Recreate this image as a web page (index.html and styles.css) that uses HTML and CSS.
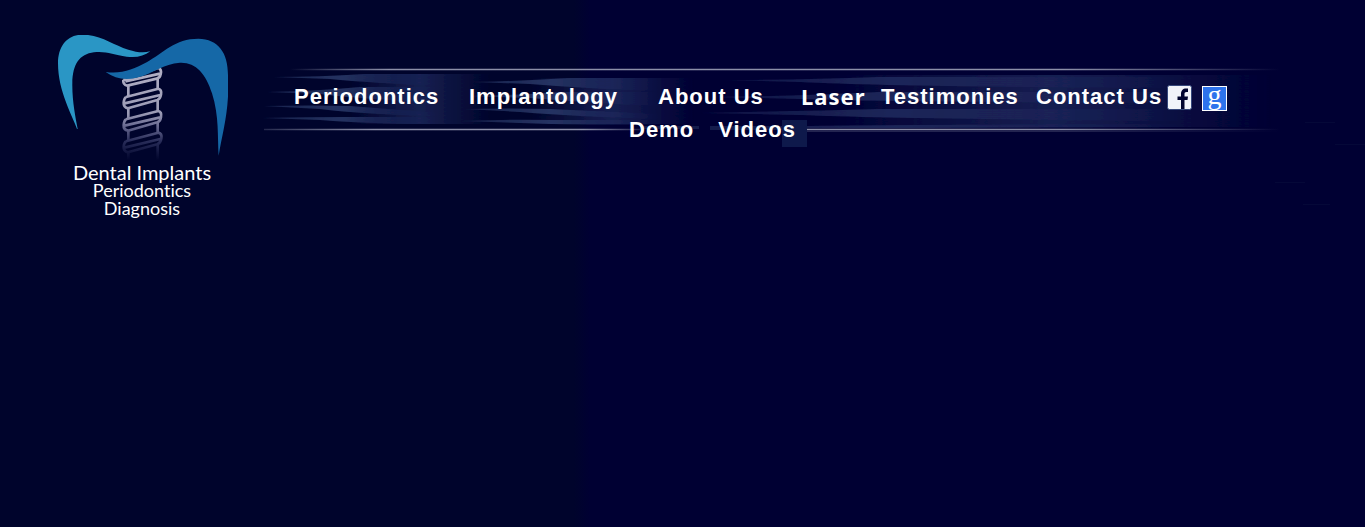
FILE: index.html
```
<!DOCTYPE html>
<html lang="en">
<head>
  <meta charset="UTF-8" />
  <title>Dental Implants Periodontics Diagnosis</title>
  <link rel="stylesheet" href="styles.css">
</head>
<body>
<header class="header">
  <a class="logo" href="#">
    <svg class="logo-mark" viewBox="51 45 513 375" aria-hidden="true">
      <defs>
        <linearGradient id="fade" gradientUnits="userSpaceOnUse" x1="0" y1="140" x2="0" y2="420">
          <stop offset="0" stop-color="#b4b2c6"/>
          <stop offset="0.5" stop-color="#9a9ab4"/>
          <stop offset="0.62" stop-color="#6f7096"/>
          <stop offset="0.8" stop-color="#282c58"/>
          <stop offset="1" stop-color="#00042c"/>
        </linearGradient>
      </defs>
      <!-- implant screw -->
      <g fill="none" stroke="url(#fade)" stroke-width="8" stroke-linejoin="round">
        <path d="M250 180L355 143Q366 148 362 163Q360 174 350 176L262 197Q248 194 250 180M256 184L360 161"/>
        <path d="M265 197V228M353 176V206M265 265V296M353 241V273M265 332V362M353 308V337M265 397V425M353 375V425"/>
        <path d="M258 231L355 206Q366 209 363 224Q361 237 352 240L264 265Q250 262 251 248Q252 235 258 231M254 250L361 225"/>
        <path d="M258 298L355 273Q366 276 363 291Q361 304 352 307L264 332Q250 329 251 315Q252 302 258 298M254 317L361 292"/>
        <path d="M258 364L355 338Q367 341 364 356Q362 369 352 373L264 397Q250 394 251 380Q252 368 258 364M254 383L361 357"/>
      </g>
      <path fill="#2a96c5" d="M111 327C98 288 54 215 54 130C54 76 84 44 127 44C183 44 218 75 265 89C290 97 310 99 331 94C312 109 288 114 260 110C220 104 198 93 162 97C118 103 98 132 97 190C96 240 107 295 113 327Z"/>
      <path fill="#1568a7" d="M197 156C243 163 282 148 320 127C370 98 405 56 475 56C535 57 564 98 564 165V230C560 300 545 350 536 407C532 350 538 290 516 220C498 160 466 126 420 128C370 131 342 160 290 173C255 182 225 176 197 156Z"/>
    </svg>
    <span class="logo-title">Dental Implants</span>
    <span class="logo-line">Periodontics</span>
    <span class="logo-line">Diagnosis</span>
  </a>

  <nav class="nav">
    <svg class="streaks" width="1103" height="160" viewBox="262 60 1103 160" aria-hidden="true">
      <defs>
        <linearGradient id="line" gradientUnits="userSpaceOnUse" x1="290" y1="0" x2="1280" y2="0">
          <stop offset="0" stop-color="#8c8fa8" stop-opacity="0"/>
          <stop offset="0.1" stop-color="#8c8fa8"/>
          <stop offset="0.78" stop-color="#8c8fa8"/>
          <stop offset="1" stop-color="#8c8fa8" stop-opacity="0"/>
        </linearGradient>
        <linearGradient id="lineLeft" gradientUnits="userSpaceOnUse" x1="262" y1="0" x2="640" y2="0">
          <stop offset="0" stop-color="#8c8fa8" stop-opacity="0.2"/>
          <stop offset="0.3" stop-color="#8c8fa8"/>
          <stop offset="0.85" stop-color="#8c8fa8"/>
          <stop offset="1" stop-color="#8c8fa8" stop-opacity="0.2"/>
        </linearGradient>
        <linearGradient id="beam">
          <stop offset="0" stop-color="#2b3b6a" stop-opacity="0.5"/>
          <stop offset="0.45" stop-color="#2b3b6a" stop-opacity="0.85"/>
          <stop offset="1" stop-color="#1c2760" stop-opacity="0"/>
        </linearGradient>
        <linearGradient id="beamWide">
          <stop offset="0" stop-color="#202a5c" stop-opacity="0.4"/>
          <stop offset="0.4" stop-color="#202a5c" stop-opacity="0.9"/>
          <stop offset="1" stop-color="#1c2760" stop-opacity="0"/>
        </linearGradient>
        <linearGradient id="glow">
          <stop offset="0" stop-color="#1a2456" stop-opacity="0"/>
          <stop offset="0.5" stop-color="#1a2456" stop-opacity="0.85"/>
          <stop offset="1" stop-color="#1a2456" stop-opacity="0"/>
        </linearGradient>
        <filter id="soft" x="-5%" y="-20%" width="110%" height="140%">
          <feGaussianBlur stdDeviation="1 0.6"/>
        </filter>
      </defs>
      <g filter="url(#soft)">
        <path fill="url(#glow)" d="M350 74H490V124H350Z"/>
        <path fill="url(#glow)" d="M530 78H695V124H530Z"/>
        <path fill="url(#glow)" d="M830 75H1274V127H830Z"/>
        <path fill="url(#beam)" d="M273 77Q320 77 365 74H440V86Q370 83 330 79ZM267 92Q320 91 360 87H440V103Q360 99 320 94ZM263 106Q310 105 350 106L440 113V116Q370 115 320 109ZM262 118Q310 117 350 117H440V124Q370 124 320 120Z"/>
        <path fill="url(#beam)" d="M475 82Q520 81 570 78H660V91Q590 89 530 84ZM470 96Q520 95 560 92H660V106Q590 103 530 98ZM465 109Q510 108 550 109L660 114V119Q580 117 520 112ZM463 121Q510 119 550 120H660V125Q580 125 520 123Z"/>
        <path fill="url(#beamWide)" d="M725 80Q800 80 880 77H1190V88Q900 87 800 82ZM710 97Q800 96 880 92H1190V103Q900 102 800 99ZM700 113Q800 111 880 109H1190V121Q900 119 800 115ZM806 126Q850 125 1190 124V128H806Z"/>
      </g>
      <path fill="url(#line)" fill-opacity="0.25" d="M290 68H1280V71H290ZM806 128H1280V132H806Z"/>
      <path fill="url(#lineLeft)" fill-opacity="0.25" d="M264 128H640V131H264Z"/>
      <path fill="url(#line)" d="M290 69H1280V70H290Z"/>
      <path fill="url(#lineLeft)" d="M264 129H640V130H264Z"/>
      <path fill="url(#line)" d="M806 129H1280V130H806Z"/>
      <path fill="#141c4c" d="M640 126H699V129H640ZM710 126H782V130H710Z"/>
      <path fill="#0e194b" d="M782 120H807V147H782Z"/>
      <path fill="#050838" d="M1305 122H1335V123H1305ZM1335 144H1365V145H1335ZM1275 182H1305V183H1275ZM1303 204H1330V205H1303Z"/>
    </svg>

    <ul class="menu">
      <li><a href="#">Periodontics</a></li>
      <li><a href="#">Implantology</a></li>
      <li><a href="#">About Us</a></li>
      <li><a class="laser" href="#">Laser</a></li>
      <li><a href="#">Testimonies</a></li>
      <li><a href="#">Contact Us</a></li>
      <li>
        <a class="social" href="#" aria-label="Facebook">
          <svg viewBox="0 0 25 25" width="25" height="25">
            <rect x="0.5" y="0.5" width="24" height="24" rx="2" fill="#f0f3f9" stroke="#35477b"/>
            <path fill="#00042f" d="M14 24V15H10.500V11.500H14V9C14 5.500 16 3.500 19 3.500H21V7H19.500C18 7 17.500 7.800 17.500 9V11.500H21L20.500 15H17.500V24Z"/>
          </svg>
        </a>
      </li>
      <li><a class="social google" href="#" aria-label="Google">g</a></li>
    </ul>
    <ul class="menu-more">
      <li><a href="#">Demo</a></li>
      <li><a href="#">Videos</a></li>
    </ul>
  </nav>
</header>
</body>
</html>
```
FILE: styles.css
```
body {
    margin: 0;
    min-height: 100vh;
    background: linear-gradient(to right, #00042c 574px, #000033 590px);
    color: #fff;
    font-family: "Liberation Sans", Arial, sans-serif;
    overflow-x: hidden;
}

a {
    color: inherit;
    text-decoration: none;
}

ul {
    list-style: none;
    margin: 0;
    padding: 0;
}

.header {
    display: flex;
    align-items: flex-start;
    padding-left: 57px;
}

.logo {
    display: flex;
    flex: none;
    flex-direction: column;
    align-items: center;
    width: 170px;
    padding-top: 35px;
    font-family: Lato, sans-serif;
    font-variant-ligatures: none;
    line-height: 18px;
}

.logo-mark {
    width: 171px;
    height: 125px;
    margin-bottom: 3px;
}

.logo-title {
    font-size: 20px;
}

.logo-line {
    font-size: 18px;
}

.nav {
    position: relative;
    flex: 1;
    margin-left: 35px;
    padding: 80px 0 0 32px;
    font-size: 22px;
    font-weight: bold;
    letter-spacing: 1px;
    line-height: 34px;
}

/* light beams behind the menu */
.streaks {
    position: absolute;
    top: 60px;
    left: 0;
}

.menu {
    position: relative;
    display: grid;
    grid-template-columns: 175px 189px 143px 80px 155px 131px 35px 25px;
    height: 33px;
}

.menu li {
    white-space: nowrap;
}

.laser {
    display: block;
    font-family: "Noto Sans", sans-serif;
    line-height: 32px;
}

.social {
    display: block;
    width: 25px;
    height: 25px;
    margin-top: 5px;
}

.social svg {
    display: block;
}

.google {
    box-sizing: border-box;
    margin-top: 6px;
    border: 1px solid #fff;
    background-color: #2d73ec;
    font-family: "Liberation Serif", serif;
    font-size: 28px;
    font-weight: normal;
    letter-spacing: 0;
    line-height: 16px;
    text-align: center;
}

.menu-more {
    position: relative;
    display: flex;
    gap: 24px;
    padding-left: 335px;
}
```
